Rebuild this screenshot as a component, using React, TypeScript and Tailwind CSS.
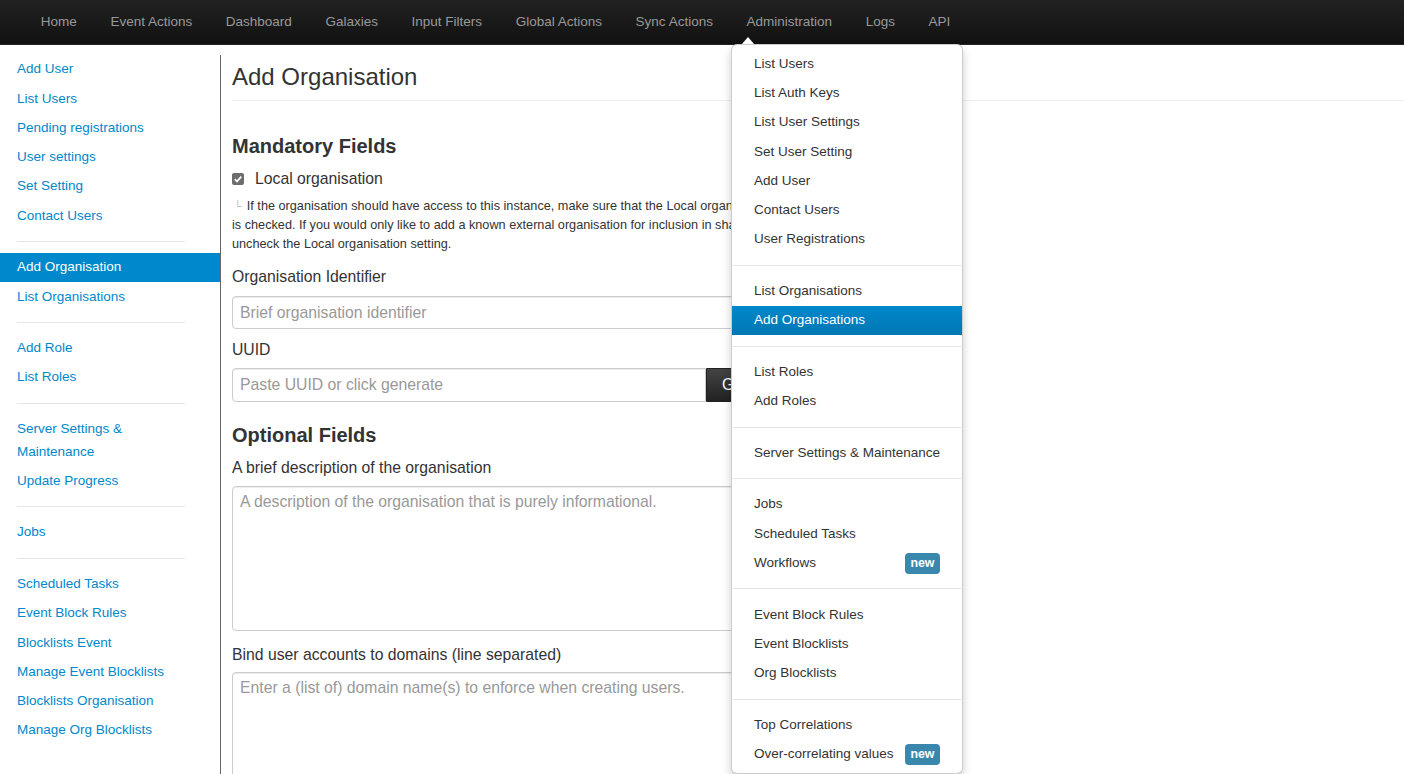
import React from "react";

const navItems = [
  "Home",
  "Event Actions",
  "Dashboard",
  "Galaxies",
  "Input Filters",
  "Global Actions",
  "Sync Actions",
  "Administration",
  "Logs",
  "API",
];

type SideEntry = { label: React.ReactNode; active?: boolean } | "divider";

const sideItems: SideEntry[] = [
  { label: "Add User" },
  { label: "List Users" },
  { label: "Pending registrations" },
  { label: "User settings" },
  { label: "Set Setting" },
  { label: "Contact Users" },
  "divider",
  { label: "Add Organisation", active: true },
  { label: "List Organisations" },
  "divider",
  { label: "Add Role" },
  { label: "List Roles" },
  "divider",
  {
    label: (
      <>
        Server Settings &amp;
        <br />
        Maintenance
      </>
    ),
  },
  { label: "Update Progress" },
  "divider",
  { label: "Jobs" },
  "divider",
  { label: "Scheduled Tasks" },
  { label: "Event Block Rules" },
  { label: "Blocklists Event" },
  { label: "Manage Event Blocklists" },
  { label: "Blocklists Organisation" },
  { label: "Manage Org Blocklists" },
];

type DropEntry = { label: string; active?: boolean; badge?: boolean } | "divider";

const dropItems: DropEntry[] = [
  { label: "List Users" },
  { label: "List Auth Keys" },
  { label: "List User Settings" },
  { label: "Set User Setting" },
  { label: "Add User" },
  { label: "Contact Users" },
  { label: "User Registrations" },
  "divider",
  { label: "List Organisations" },
  { label: "Add Organisations", active: true },
  "divider",
  { label: "List Roles" },
  { label: "Add Roles" },
  "divider",
  { label: "Server Settings & Maintenance" },
  "divider",
  { label: "Jobs" },
  { label: "Scheduled Tasks" },
  { label: "Workflows", badge: true },
  "divider",
  { label: "Event Block Rules" },
  { label: "Event Blocklists" },
  { label: "Org Blocklists" },
  "divider",
  { label: "Top Correlations" },
  { label: "Over-correlating values", badge: true },
];

export default function App() {
  return (
    <div className="relative w-[1404px] h-[774px] overflow-hidden bg-white font-['Liberation_Sans',Arial,sans-serif] text-[#333]">
      {/* Navbar */}
      <nav className="h-[45px] bg-gradient-to-b from-[#222222] to-[#111111] border-b border-[#252525] flex items-center pl-[24px]">
        {navItems.map((n) => (
          <span key={n} className="px-[16.8px] text-[13.5px] text-[#999999] leading-[20px] pb-[1px] whitespace-nowrap">
            {n}
          </span>
        ))}
      </nav>

      <div className="flex">
        {/* Sidebar */}
        <aside className="w-[221px] shrink-0 mt-[10px] h-[719px] border-r border-[#666666]">
          {sideItems.map((s, i) =>
            s === "divider" ? (
              <div key={i} className="ml-[17px] w-[168px] h-px bg-[#e5e5e5] my-[10.7px]" />
            ) : (
              <div
                key={i}
                className={
                  "pl-[17px] py-[3.375px] text-[13.5px] leading-[22.5px] whitespace-nowrap " +
                  (s.active ? "bg-[#0088cc] text-white" : "text-[#0088cc]")
                }
              >
                {s.label}
              </div>
            )
          )}
        </aside>

        {/* Main */}
        <main className="flex-1 pl-[11px]">
          <h2 className="mt-[14px] text-[24px] leading-[36px] pb-[5px] border-b border-[#eeeeee] text-[#333]">
            Add Organisation
          </h2>

          <h3 className="mt-[33px] text-[20px] leading-[24px] font-bold text-[#333]">Mandatory Fields</h3>

          <div className="mt-[10px] h-[22.5px] flex items-center">
            <span className="w-[12px] h-[12px] rounded-[2px] bg-[#6d6d6d] flex items-center justify-center">
              <svg width="10" height="10" viewBox="0 0 10 10">
                <polyline points="1.8,5.2 4,7.4 8.3,2.6" fill="none" stroke="white" strokeWidth="1.7" />
              </svg>
            </span>
            <span className="ml-[11px] text-[15.75px] text-[#333]">Local organisation</span>
          </div>

          <div className="mt-[6.25px] w-[499px] overflow-hidden text-[12.7px] leading-[19px] text-[#333] whitespace-nowrap">
            <div>
              <span className="text-[#bbbbbb] text-[11px] ml-[2px] mr-[5px]">└</span>
              If the organisation should have access to this instance, make sure that the Local organisation setting
            </div>
            <div>is checked. If you would only like to add a known external organisation for inclusion in sharing groups,</div>
            <div>uncheck the Local organisation setting.</div>
          </div>

          <div className="mt-[12.5px] text-[15.75px] leading-[22.5px]">Organisation Identifier</div>
          <div className="mt-[7.5px] w-[620px] h-[33px] border border-[#cccccc] rounded-[4px] shadow-[inset_0_1px_1px_rgba(0,0,0,0.075)] flex items-center pl-[7px] text-[15.75px] text-[#999999]">
            Brief organisation identifier
          </div>

          <div className="mt-[10px] text-[15.75px] leading-[22.5px]">UUID</div>
          <div className="mt-[6.5px] h-[34px] flex">
            <div className="w-[474px] h-full border border-[#cccccc] rounded-l-[4px] shadow-[inset_0_1px_1px_rgba(0,0,0,0.075)] flex items-center pl-[7px] text-[15.75px] text-[#999999]">
              Paste UUID or click generate
            </div>
            <div className="h-full px-[15px] bg-gradient-to-b from-[#444444] to-[#222222] rounded-r-[4px] border border-[#222222] flex items-center text-white text-[15.75px]">
              Generate
            </div>
          </div>

          <h3 className="mt-[21px] text-[20px] leading-[24px] font-bold text-[#333]">Optional Fields</h3>

          <div className="mt-[10px] text-[15.75px] leading-[22.5px]">A brief description of the organisation</div>
          <div className="mt-[6.5px] w-[620px] h-[145px] border border-[#cccccc] rounded-[4px] shadow-[inset_0_1px_1px_rgba(0,0,0,0.075)] pl-[7px] pt-[4px] text-[15.75px] leading-[22.5px] text-[#999999]">
            A description of the organisation that is purely informational.
          </div>

          <div className="mt-[13px] text-[15.75px] leading-[22.5px]">Bind user accounts to domains (line separated)</div>
          <div className="mt-[5.5px] w-[620px] h-[145px] border border-[#cccccc] rounded-[4px] shadow-[inset_0_1px_1px_rgba(0,0,0,0.075)] pl-[7px] pt-[4px] text-[15.75px] leading-[22.5px] text-[#999999]">
            Enter a (list of) domain name(s) to enforce when creating users.
          </div>
        </main>
      </div>

      {/* Dropdown */}
      <div className="absolute left-[731px] top-[44px] w-[232px] bg-white border border-[rgba(0,0,0,0.2)] rounded-[6px] shadow-[0_5px_10px_rgba(0,0,0,0.2)] pt-[4.5px] pb-[4.5px]">
        {dropItems.map((d, i) =>
          d === "divider" ? (
            <div key={i} className="mx-px h-px bg-[#e5e5e5] my-[10.7px]" />
          ) : (
            <div
              key={i}
              className={
                "flex items-center px-[22px] py-[3.375px] text-[13.5px] leading-[22.5px] whitespace-nowrap " +
                (d.active ? "bg-gradient-to-b from-[#0088cc] to-[#0077b3] text-white" : "text-[#333333]")
              }
            >
              <span>{d.label}</span>
              {d.badge && (
                <span className="ml-auto h-[21px] px-[5.5px] rounded-[4px] bg-[#3a87ad] text-white font-bold text-[12.4px] leading-[21px]">
                  new
                </span>
              )}
            </div>
          )
        )}
      </div>
      <div className="absolute left-[742px] top-[37px] w-0 h-0 border-l-[6.5px] border-r-[6.5px] border-b-[7.5px] border-l-transparent border-r-transparent border-b-white" />
    </div>
  );
}
